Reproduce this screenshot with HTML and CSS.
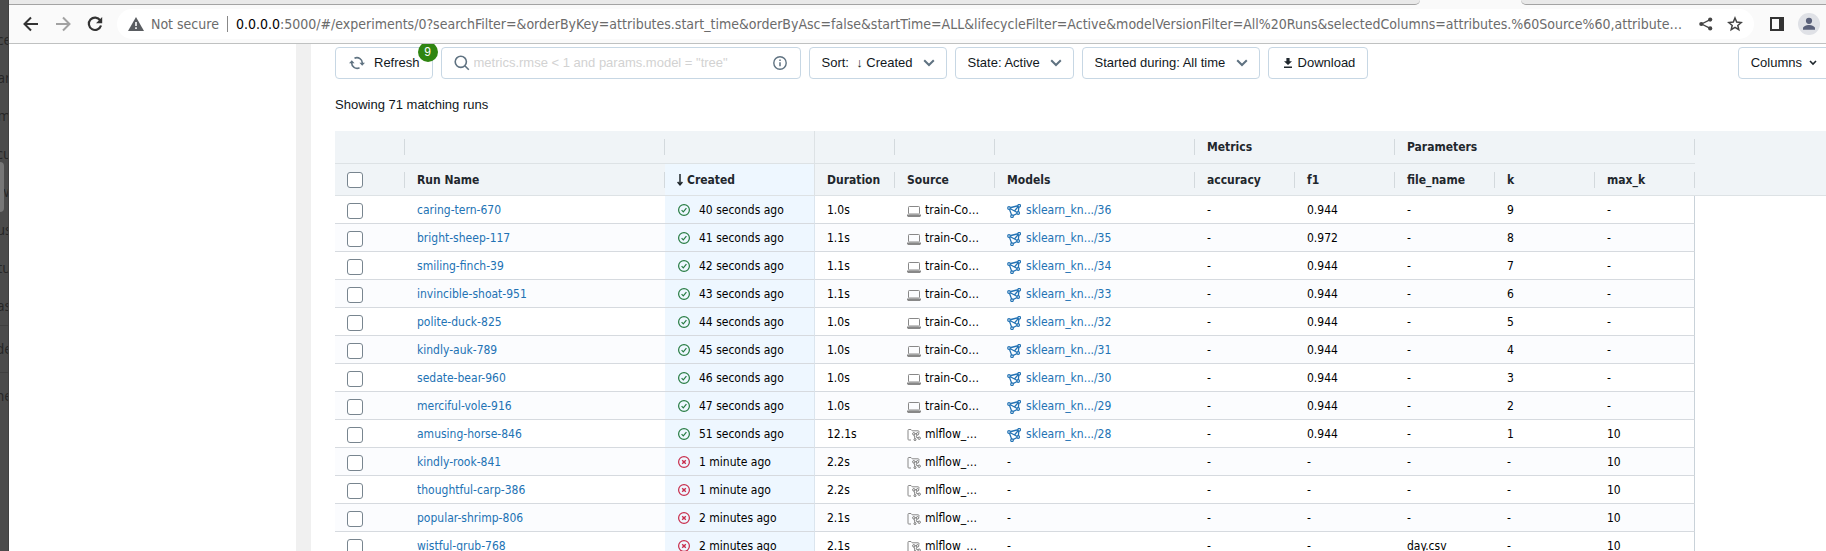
FILE: index.html
```html
<!DOCTYPE html>
<html lang="en">
<head>
<meta charset="utf-8">
<title>Experiments</title>
<link rel="stylesheet" href="styles.css">
</head>
<body>
<svg class="symbols" aria-hidden="true">
  <symbol id="ok" viewBox="0 0 12 12"><circle cx="6" cy="6" r="5.4" fill="none" stroke="#277c43" stroke-width="1.2"/><path d="M3.6 6.2l1.700 1.700 3.100-3.700" fill="none" stroke="#277c43" stroke-width="1.2"/></symbol>
  <symbol id="bad" viewBox="0 0 12 12"><circle cx="6" cy="6" r="5.4" fill="none" stroke="#c82d4c" stroke-width="1.2"/><path d="M4.200 4.200l3.600 3.600M7.800 4.200L4.200 7.800" fill="none" stroke="#c82d4c" stroke-width="1.4"/></symbol>
  <symbol id="laptop" viewBox="0 0 14 12"><rect x="1.500" y="1.500" width="11" height="7.500" rx="0.800" fill="none" stroke="#888"/><path d="M0 9.600h14v1.200L13 12H1l-1-1.200z" fill="#888"/></symbol>
  <symbol id="project" viewBox="0 0 14 12"><path d="M4 11H1.800a.8.8 0 0 1-.8-.8V1.300a.8.8 0 0 1 .8-.8H4l1.200 1.300h6a.8.8 0 0 1 .8.800v1" fill="none" stroke="#888"/><path d="M6.800 4.800l1.400 6M6.800 4.800h3.800L9 8l3 1.200" fill="none" stroke="#888"/><g fill="#fff" stroke="#777"><circle cx="6.800" cy="4.800" r="1.200"/><circle cx="10.600" cy="4.800" r="1.200"/><circle cx="8" cy="10.600" r="1"/><circle cx="12.200" cy="9.200" r="1.200"/></g></symbol>
  <symbol id="model" viewBox="0 0 14 14"><path d="M2 4l10-2.500-.8 7.500L5 12.200zM2 4l9.200 5M12 1.500L7.500 7" fill="none" stroke="#2272b4" stroke-width="1.300"/><g fill="#fff" stroke="#2272b4" stroke-width="1.200"><circle cx="2" cy="4" r="1.300"/><circle cx="12.200" cy="1.800" r="1.300"/><circle cx="11.200" cy="9" r="1.300"/><circle cx="5" cy="12.200" r="1.300"/></g></symbol>
  <symbol id="chevron" viewBox="0 0 12 8"><path d="M1.200 1.200L6 6l4.800-4.800" fill="none" stroke="#5f7281" stroke-width="2"/></symbol>
</svg>
<div class="backdrop" aria-hidden="true">
  <i class="thumb"></i>
  <p>ce</p><p>ar</p><p>m</p><p>cu</p><p>w</p><p>us</p><p>tu</p><p>as</p><p class="ruled">de</p><p class="ruled">he</p>
</div>
<div class="window">
  <div class="tabs"><span class="tab tab-left"></span><span class="tab-active"></span><span class="tab tab-right"></span></div>
  <header class="browser">
    <button class="nav" aria-label="Back"><svg width="16" height="16" viewBox="0 0 16 16"><path d="M15 8H2.500M8 1.500L1.500 8 8 14.500" fill="none" stroke="#333" stroke-width="2"/></svg></button>
    <button class="nav" aria-label="Forward"><svg width="16" height="16" viewBox="0 0 16 16"><path d="M1 8h12.500M8 1.500L14.500 8 8 14.500" fill="none" stroke="#a2a2a2" stroke-width="2"/></svg></button>
    <button class="nav" aria-label="Reload"><svg width="16" height="16" viewBox="0 0 16 16"><path d="M13.200 4.300A6.200 6.200 0 1 0 14 9.500" fill="none" stroke="#333" stroke-width="2.200"/><path d="M15.200 1v6.200H9z" fill="#333"/></svg></button>
    <div class="address">
      <svg width="16" height="14" viewBox="0 0 16 14"><path d="M8 0l8 14H0z" fill="#5a5d61"/><path d="M8 5v4M8 10.300v1.700" stroke="#fff" stroke-width="1.600"/></svg>
      <span class="secure">Not secure</span>
      <span class="url"><b>0.0.0.0</b>:5000/#/experiments/0?searchFilter=&amp;orderByKey=attributes.start_time&amp;orderByAsc=false&amp;startTime=ALL&amp;lifecycleFilter=Active&amp;modelVersionFilter=All%20Runs&amp;selectedColumns=attributes.%60Source%60,attribute…</span>
      <button class="nav" aria-label="Share"><svg width="14" height="14" viewBox="0 0 14 14"><path d="M11.200 2.600L2.600 7l8.600 4.400" fill="none" stroke="#444" stroke-width="1.300"/><g fill="#444"><circle cx="11.200" cy="2.600" r="2.100"/><circle cx="2.300" cy="7" r="2.100"/><circle cx="11.200" cy="11.400" r="2.100"/></g></svg></button>
      <button class="nav" aria-label="Bookmark"><svg width="16" height="16" viewBox="0 0 16 16"><path d="M8 2l1.700 4.100 4.500.4-3.400 2.900 1 4.300L8 11.400l-3.800 2.300 1-4.300L1.800 6.500l4.500-.4z" fill="none" stroke="#444" stroke-width="1.500"/></svg></button>
    </div>
    <button class="nav" aria-label="Side panel"><svg width="14" height="14" viewBox="0 0 14 14"><path d="M0 0h14v14H0zM2 2v10h7V2z" fill="#333" fill-rule="evenodd"/></svg></button>
    <button class="nav profile" aria-label="Profile"><svg width="22" height="22" viewBox="0 0 22 22"><circle cx="11" cy="11" r="11" fill="#dfe1e6"/><circle cx="11" cy="7.800" r="3.100" fill="#5a617a"/><path d="M5 16.800v-1.400c0-2 3.400-3.300 6-3.300s6 1.300 6 3.300v1.400z" fill="#5a617a"/></svg></button>
  </header>
  <div class="page">
    <aside class="sidebar"></aside>
    <main class="main">
      <div class="toolbar">
        <button class="btn refresh"><svg width="16" height="14" viewBox="0 0 16 14"><g fill="none" stroke="#5f7281" stroke-width="1.600"><path d="M5.500 2.200A5.400 5.400 0 0 1 13.300 7.500M10.500 11.800A5.400 5.400 0 0 1 2.700 6.500"/></g><path d="M10.400 6.800H16l-2.800 3zM0 7.200h5.600l-2.800-3z" fill="#5f7281"/></svg>Refresh<span class="badge">9</span></button>
        <label class="search">
          <svg width="16" height="16" viewBox="0 0 16 16"><circle cx="6.800" cy="6.800" r="5.600" fill="none" stroke="#5f7281" stroke-width="1.600"/><path d="M10.800 10.800l4 4" stroke="#5f7281" stroke-width="1.600"/></svg>
          <input type="text" aria-label="Search runs" placeholder='metrics.rmse &lt; 1 and params.model = "tree"'>
          <svg width="14" height="14" viewBox="0 0 14 14"><circle cx="7" cy="7" r="6.200" fill="none" stroke="#5f7281" stroke-width="1.400"/><path d="M7 6.200v4M7 3.600v1.500" stroke="#5f7281" stroke-width="1.500"/></svg>
        </label>
        <div class="picker"><select aria-label="Sort"><option>Sort:&nbsp; ↓ Created</option></select><svg><use href="#chevron"/></svg></div>
        <div class="picker"><select aria-label="State"><option>State: Active</option></select><svg><use href="#chevron"/></svg></div>
        <div class="picker"><select aria-label="Started during"><option>Started during: All time</option></select><svg><use href="#chevron"/></svg></div>
        <button class="btn download"><svg width="10" height="10" viewBox="0 0 10 10"><path d="M3.400 0h3.200v3.200H9L5 7 1 3.200h2.400zM1 8.400h8V10H1z" fill="#1f272d"/></svg>Download</button>
        <button class="btn columns">Columns<svg width="8" height="6" viewBox="0 0 8 6"><path d="M1 1l3 3 3-3" fill="none" stroke="#1f272d" stroke-width="1.600"/></svg></button>
      </div>
      <p class="count">Showing 71 matching runs</p>
      <table class="runs">
        <colgroup><col class="c-check"><col class="c-name"><col class="c-created"><col class="c-duration"><col class="c-source"><col class="c-models"><col class="c-value"><col class="c-value"><col class="c-value"><col class="c-value"><col class="c-value"><col></colgroup>
        <thead>
          <tr class="groups"><th></th><th></th><th class="pin"></th><th></th><th></th><th></th><th colspan="2">Metrics</th><th colspan="3">Parameters</th><td class="rest"></td></tr>
          <tr class="heads"><th><input type="checkbox" aria-label="Select all runs"></th><th>Run Name</th><th class="created pin"><svg class="sort" width="6" height="12" viewBox="0 0 6 12"><path d="M3 0v10.500M.6 8L3 10.800 5.400 8" fill="none" stroke="#1f272d" stroke-width="1.500"/></svg>Created</th><th>Duration</th><th>Source</th><th>Models</th><th>accuracy</th><th>f1</th><th>file_name</th><th>k</th><th>max_k</th><td class="rest"></td></tr>
        </thead>
        <tbody>
          <tr><td><input type="checkbox" aria-label="caring-tern-670"></td><td><a href="#">caring-tern-670</a></td><td class="created"><svg class="status"><use href="#ok"/></svg>40 seconds ago</td><td>1.0s</td><td><svg class="src"><use href="#laptop"/></svg>train-Co…</td><td><svg class="mdl"><use href="#model"/></svg><a href="#">sklearn_kn.../36</a></td><td>-</td><td>0.944</td><td>-</td><td>9</td><td>-</td><td class="rest"></td></tr>
          <tr><td><input type="checkbox" aria-label="bright-sheep-117"></td><td><a href="#">bright-sheep-117</a></td><td class="created"><svg class="status"><use href="#ok"/></svg>41 seconds ago</td><td>1.1s</td><td><svg class="src"><use href="#laptop"/></svg>train-Co…</td><td><svg class="mdl"><use href="#model"/></svg><a href="#">sklearn_kn.../35</a></td><td>-</td><td>0.972</td><td>-</td><td>8</td><td>-</td><td class="rest"></td></tr>
          <tr><td><input type="checkbox" aria-label="smiling-finch-39"></td><td><a href="#">smiling-finch-39</a></td><td class="created"><svg class="status"><use href="#ok"/></svg>42 seconds ago</td><td>1.1s</td><td><svg class="src"><use href="#laptop"/></svg>train-Co…</td><td><svg class="mdl"><use href="#model"/></svg><a href="#">sklearn_kn.../34</a></td><td>-</td><td>0.944</td><td>-</td><td>7</td><td>-</td><td class="rest"></td></tr>
          <tr><td><input type="checkbox" aria-label="invincible-shoat-951"></td><td><a href="#">invincible-shoat-951</a></td><td class="created"><svg class="status"><use href="#ok"/></svg>43 seconds ago</td><td>1.1s</td><td><svg class="src"><use href="#laptop"/></svg>train-Co…</td><td><svg class="mdl"><use href="#model"/></svg><a href="#">sklearn_kn.../33</a></td><td>-</td><td>0.944</td><td>-</td><td>6</td><td>-</td><td class="rest"></td></tr>
          <tr><td><input type="checkbox" aria-label="polite-duck-825"></td><td><a href="#">polite-duck-825</a></td><td class="created"><svg class="status"><use href="#ok"/></svg>44 seconds ago</td><td>1.0s</td><td><svg class="src"><use href="#laptop"/></svg>train-Co…</td><td><svg class="mdl"><use href="#model"/></svg><a href="#">sklearn_kn.../32</a></td><td>-</td><td>0.944</td><td>-</td><td>5</td><td>-</td><td class="rest"></td></tr>
          <tr><td><input type="checkbox" aria-label="kindly-auk-789"></td><td><a href="#">kindly-auk-789</a></td><td class="created"><svg class="status"><use href="#ok"/></svg>45 seconds ago</td><td>1.0s</td><td><svg class="src"><use href="#laptop"/></svg>train-Co…</td><td><svg class="mdl"><use href="#model"/></svg><a href="#">sklearn_kn.../31</a></td><td>-</td><td>0.944</td><td>-</td><td>4</td><td>-</td><td class="rest"></td></tr>
          <tr><td><input type="checkbox" aria-label="sedate-bear-960"></td><td><a href="#">sedate-bear-960</a></td><td class="created"><svg class="status"><use href="#ok"/></svg>46 seconds ago</td><td>1.0s</td><td><svg class="src"><use href="#laptop"/></svg>train-Co…</td><td><svg class="mdl"><use href="#model"/></svg><a href="#">sklearn_kn.../30</a></td><td>-</td><td>0.944</td><td>-</td><td>3</td><td>-</td><td class="rest"></td></tr>
          <tr><td><input type="checkbox" aria-label="merciful-vole-916"></td><td><a href="#">merciful-vole-916</a></td><td class="created"><svg class="status"><use href="#ok"/></svg>47 seconds ago</td><td>1.0s</td><td><svg class="src"><use href="#laptop"/></svg>train-Co…</td><td><svg class="mdl"><use href="#model"/></svg><a href="#">sklearn_kn.../29</a></td><td>-</td><td>0.944</td><td>-</td><td>2</td><td>-</td><td class="rest"></td></tr>
          <tr><td><input type="checkbox" aria-label="amusing-horse-846"></td><td><a href="#">amusing-horse-846</a></td><td class="created"><svg class="status"><use href="#ok"/></svg>51 seconds ago</td><td>12.1s</td><td><svg class="src"><use href="#project"/></svg>mlflow_…</td><td><svg class="mdl"><use href="#model"/></svg><a href="#">sklearn_kn.../28</a></td><td>-</td><td>0.944</td><td>-</td><td>1</td><td>10</td><td class="rest"></td></tr>
          <tr><td><input type="checkbox" aria-label="kindly-rook-841"></td><td><a href="#">kindly-rook-841</a></td><td class="created"><svg class="status"><use href="#bad"/></svg>1 minute ago</td><td>2.2s</td><td><svg class="src"><use href="#project"/></svg>mlflow_…</td><td>-</td><td>-</td><td>-</td><td>-</td><td>-</td><td>10</td><td class="rest"></td></tr>
          <tr><td><input type="checkbox" aria-label="thoughtful-carp-386"></td><td><a href="#">thoughtful-carp-386</a></td><td class="created"><svg class="status"><use href="#bad"/></svg>1 minute ago</td><td>2.2s</td><td><svg class="src"><use href="#project"/></svg>mlflow_…</td><td>-</td><td>-</td><td>-</td><td>-</td><td>-</td><td>10</td><td class="rest"></td></tr>
          <tr><td><input type="checkbox" aria-label="popular-shrimp-806"></td><td><a href="#">popular-shrimp-806</a></td><td class="created"><svg class="status"><use href="#bad"/></svg>2 minutes ago</td><td>2.1s</td><td><svg class="src"><use href="#project"/></svg>mlflow_…</td><td>-</td><td>-</td><td>-</td><td>-</td><td>-</td><td>10</td><td class="rest"></td></tr>
          <tr><td><input type="checkbox" aria-label="wistful-grub-768"></td><td><a href="#">wistful-grub-768</a></td><td class="created"><svg class="status"><use href="#bad"/></svg>2 minutes ago</td><td>2.1s</td><td><svg class="src"><use href="#project"/></svg>mlflow_…</td><td>-</td><td>-</td><td>-</td><td>day.csv</td><td>-</td><td>10</td><td class="rest"></td></tr>
        </tbody>
      </table>
    </main>
  </div>
</div>
</body>
</html>
```
FILE: styles.css
```css
* { box-sizing: border-box; }
body {
  margin: 0;
  height: 100vh;
  display: flex;
  overflow: hidden;
  background: #fff;
  color: #11171c;
  font: 13px/20px "Liberation Sans", Arial, sans-serif;
}
p { margin: 0; }
button { font: inherit; color: inherit; cursor: pointer; }
svg { flex: none; }
.symbols { position: absolute; width: 0; height: 0; }

/* Dimmed window behind */
.backdrop {
  position: relative;
  flex: none;
  width: 9px;
  padding-top: 21px;
  overflow: hidden;
  background: #4b4b4b;
  border-right: 1px solid #404040;
  color: #262626;
  font: 14px/38px "Open Sans", sans-serif;
}
.backdrop p { display: flex; justify-content: center; }
.backdrop .ruled { border-top: 1px solid #404040; line-height: 46px; }
.thumb {
  position: absolute;
  left: -4px;
  top: 162px;
  width: 8px;
  height: 50px;
  border-radius: 4px;
  background: #777;
}

/* Browser chrome */
.window { flex: 1; min-width: 0; display: flex; flex-direction: column; }
.tabs { flex: none; display: flex; height: 5px; background: #fafafa; }
.tab { background: #e9e9e9; border-bottom: 1px solid #a3a3a3; }
.tab-left { flex: 1; border-bottom-right-radius: 5px; }
.tab-active { width: 101px; }
.tab-right { width: 305px; border-bottom-left-radius: 5px; }
.browser {
  flex: none;
  display: flex;
  align-items: center;
  gap: 16px;
  height: 39px;
  padding: 0 6px 0 14px;
  background: #fafafa;
  border-bottom: 1px solid #bfc1c1;
}
.nav { display: flex; padding: 0; border: 0; background: none; }
.address {
  flex: 1;
  min-width: 0;
  display: flex;
  align-items: center;
  height: 30px;
  margin-left: -2px;
  padding: 0 11px;
  border-radius: 15px;
  background: #fff;
  color: #6b6b6b;
  font: 14px/20px "DejaVu Sans Condensed", "DejaVu Sans", sans-serif;
}
.address .nav { margin-left: 14px; }
.secure { margin-left: 7px; padding-right: 8px; border-right: 1px solid #888; line-height: 16px; white-space: nowrap; }
.url { flex: 1; min-width: 0; margin-left: 8px; overflow: hidden; white-space: nowrap; }
.url b { color: #000; font-weight: 400; }
.profile { margin-left: -2px; }

/* App */
.page { flex: 1; min-height: 0; display: flex; overflow: hidden; }
.sidebar { flex: none; width: 302px; border-right: 15px solid #f0f0f0; }
.main { flex: 1; min-width: 0; padding: 3px 0 0 24px; overflow: hidden; }
.toolbar { display: flex; gap: 8px; height: 32px; }
.btn, .search, .picker select {
  height: 32px;
  border: 1px solid #c7d7e4;
  border-radius: 4px;
  background: #fff;
}
.btn { display: flex; align-items: center; padding: 0 12px; }
.refresh { position: relative; gap: 9px; padding-left: 13px; }
.badge {
  position: absolute;
  right: -6px;
  top: -6px;
  width: 20px;
  height: 20px;
  border-radius: 10px;
  background: #2f8511;
  color: #fff;
  font-size: 12px;
  text-align: center;
}
.search { width: 360px; display: flex; align-items: center; gap: 4px; padding: 0 13px 0 12px; }
.search input { flex: 1; min-width: 0; padding: 0; border: 0; outline: 0; font: inherit; background: none; }
.search input::placeholder { color: #d2d2d2; }
.picker { position: relative; }
.picker select { appearance: none; padding: 0 32px 0 12px; color: inherit; font: inherit; }
.picker svg { position: absolute; right: 12px; top: 12px; width: 12px; height: 8px; pointer-events: none; }
.download { gap: 5px; padding-left: 14px; }
.columns { gap: 7px; margin-left: auto; margin-right: -4px; }
.count { margin-top: 16px; }

/* Runs table */
.runs {
  width: 100%;
  margin-top: 16px;
  table-layout: fixed;
  border-collapse: separate;
  border-spacing: 0;
  color: #000;
  font: 12px/20px "DejaVu Sans Condensed", "DejaVu Sans", sans-serif;
}
.c-check { width: 70px; }
.c-name { width: 260px; }
.c-created { width: 150px; }
.c-duration { width: 80px; }
.c-source, .c-value { width: 100px; }
.c-models { width: 200px; }
.runs th, .runs td {
  height: 28px;
  padding: 0 12px;
  border-bottom: 1px solid #d6dadf;
  text-align: left;
  white-space: nowrap;
}
.runs thead th, .runs thead td {
  height: 32px;
  background: linear-gradient(#d3d9dd, #d3d9dd) right center / 1px 16px no-repeat #f0f4f7;
  border-color: #dde2e5;
  color: #1f272d;
}
.runs .groups th, .runs .groups td { height: 33px; }
.runs .groups .rest { border-bottom-color: #f0f4f7; }
.runs thead .rest { background: #f0f4f7; }
.runs thead .pin { background: #f0f4f7; border-right: 1px solid #dde2e5; }
.runs .heads .created { background: #eef7ff; }
.runs tbody tr:nth-child(even) td { background: #fbfcfe; }
.runs tbody .created, .runs tbody tr:nth-child(even) .created { background: #eef7ff; border-right: 1px solid #dbe5ee; }
.runs tbody td:nth-last-child(2) { border-right: 1px solid #c9d2d9; }
.runs tbody .rest, .runs tbody tr:nth-child(even) .rest { border: 0; background: #fff; }
.runs a { color: #2272b4; text-decoration: none; }
.runs input {
  appearance: none;
  display: block;
  width: 16px;
  height: 16px;
  margin: 0;
  border: 1px solid #78858f;
  border-radius: 3px;
  background: #fff;
}
.runs tbody input { margin-top: 2px; }
.runs svg { vertical-align: middle; }
.status { width: 12px; height: 12px; margin: 0 9px 0 1px; }
.sort { margin-right: 4px; }
.src { width: 14px; height: 12px; margin: 2px 4px 0 0; }
.mdl { width: 14px; height: 14px; margin: 2px 5px 0 0; }
```
